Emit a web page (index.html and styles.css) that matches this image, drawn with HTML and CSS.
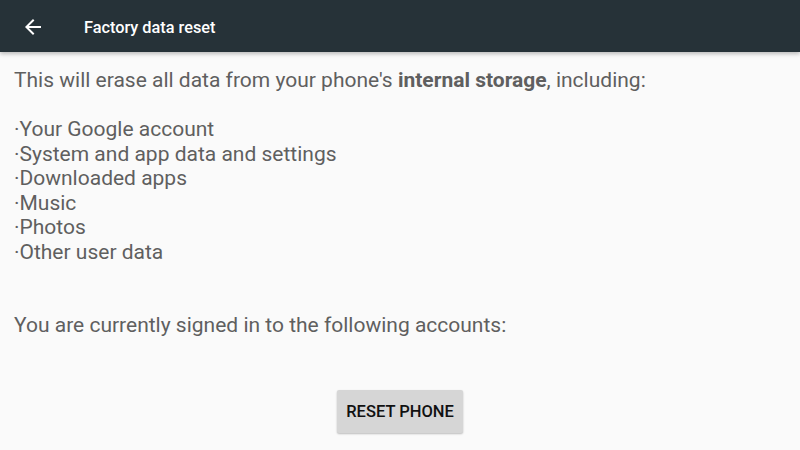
FILE: index.html
```html
<!DOCTYPE html>
<html>
<head>
<meta charset="utf-8">
<link rel="stylesheet" href="styles.css">
</head>
<body>
<header class="bar">
  <svg class="back" width="24" height="24" viewBox="0 0 24 24"><path d="M20 11H7.83l5.59-5.59L12 4l-8 8 8 8 1.41-1.41L7.83 13H20v-2z" fill="#fff"/></svg>
  <span class="title">Factory data reset</span>
</header>
<main class="content">
  <p class="line">This will erase all data from your phone's <b>internal storage</b>, including:</p>
  <p class="line blank"></p>
  <p class="line">·Your Google account</p>
  <p class="line">·System and app data and settings</p>
  <p class="line">·Downloaded apps</p>
  <p class="line">·Music</p>
  <p class="line">·Photos</p>
  <p class="line">·Other user data</p>
  <p class="line blank"></p>
  <p class="line blank"></p>
  <p class="line">You are currently signed in to the following accounts:</p>
  <div class="actions"><button class="btn">RESET PHONE</button></div>
</main>
</body>
</html>
```
FILE: styles.css
```css
html, body { margin: 0; padding: 0; }
body {
  width: 800px; height: 450px; overflow: hidden;
  background: #fafafa;
  font-family: Roboto, "Noto Sans", sans-serif;
}
.bar {
  height: 52px;
  padding-top: 2px;
  box-sizing: border-box;
  background: #263238;
  display: flex; align-items: center;
  box-shadow: 0 2px 4px rgba(0,0,0,0.25);
  position: relative;
}
.back { margin-left: 21px; width: 24px; height: 24px; }
.title { margin-left: 39px; color: #fff; font-size: 16.3px; font-weight: 500; }
.content { padding: 16px 0 0 14px; }
.line { margin: 0; font-size: 21px; line-height: 24.5px; color: #5f5f5f; height: 24.5px; white-space: nowrap; }
.line b { font-weight: 700; }
.actions { display: flex; justify-content: center; margin-top: 52px; padding-right: 14px; }
.btn {
  width: 126px; height: 43px;
  background: #d6d6d6; border: none; border-radius: 2px;
  box-shadow: 0 1px 2px rgba(0,0,0,0.25);
  font-family: Roboto, sans-serif; font-size: 16.5px; font-weight: 500;
  color: #111; padding: 0;
}
```
